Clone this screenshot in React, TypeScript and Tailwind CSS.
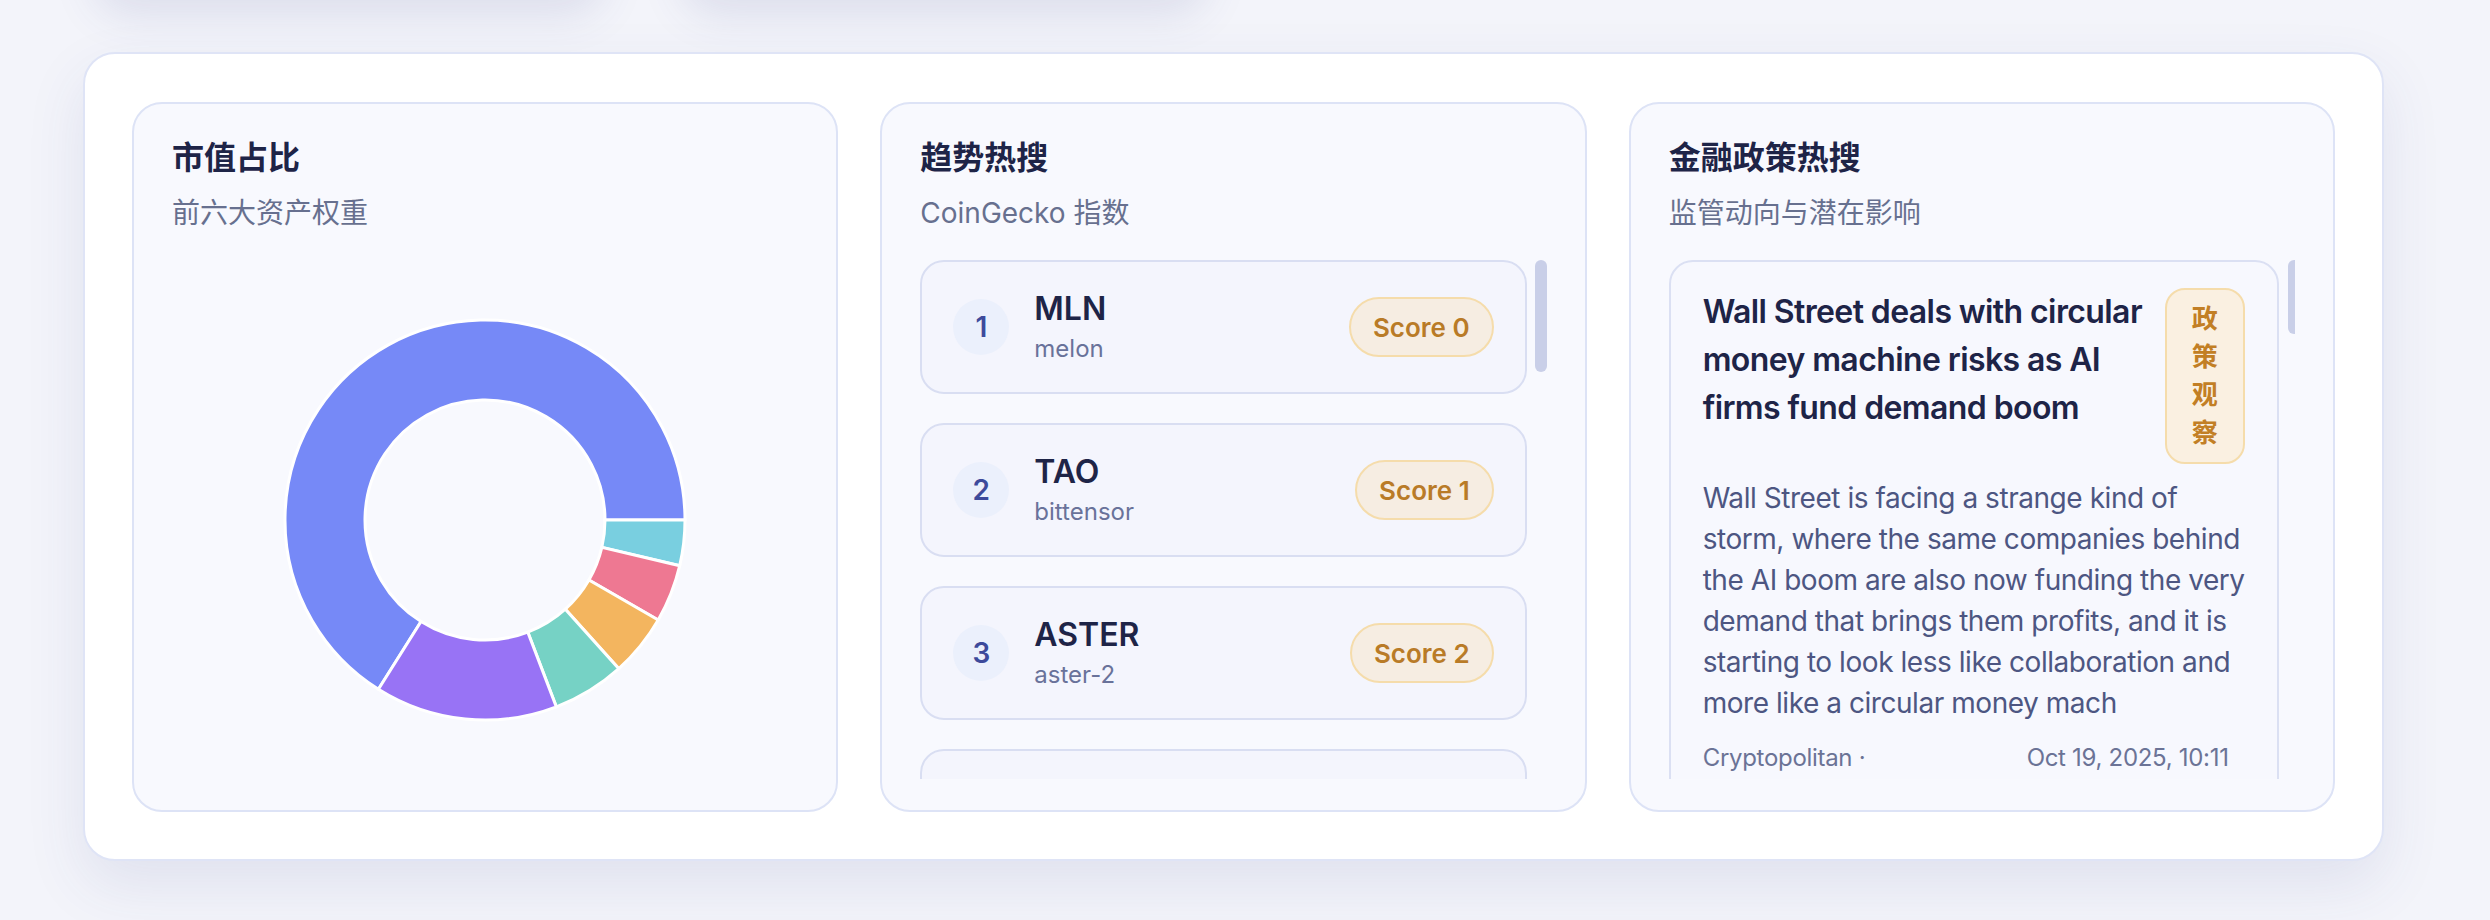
import React from "react";

const FONT = { fontFamily: "Inter, 'Noto Sans CJK SC', 'Noto Sans', sans-serif" };

type Seg = { a0: number; a1: number; color: string };

const segs: Seg[] = [
  { a0: 122.2, a1: 360, color: "#7689f7" },
  { a0: 0, a1: 13.2, color: "#79cfe0" },
  { a0: 13.2, a1: 30, color: "#ee7892" },
  { a0: 30, a1: 48, color: "#f3b55f" },
  { a0: 48, a1: 69.1, color: "#76d2c5" },
  { a0: 69.1, a1: 122.2, color: "#9873f5" },
];

function pt(cx: number, cy: number, r: number, deg: number) {
  const a = (deg * Math.PI) / 180;
  return [cx + r * Math.cos(a), cy + r * Math.sin(a)];
}

function arcPath(a0: number, a1: number, R: number, r: number) {
  const cx = 200;
  const cy = 200;
  const large = a1 - a0 > 180 ? 1 : 0;
  const [x0, y0] = pt(cx, cy, R, a0);
  const [x1, y1] = pt(cx, cy, R, a1);
  const [x2, y2] = pt(cx, cy, r, a1);
  const [x3, y3] = pt(cx, cy, r, a0);
  return `M ${x0} ${y0} A ${R} ${R} 0 ${large} 1 ${x1} ${y1} L ${x2} ${y2} A ${r} ${r} 0 ${large} 0 ${x3} ${y3} Z`;
}

function Donut() {
  return (
    <svg width="404" height="404" viewBox="-2 -2 404 404">
      {segs.map((s, i) => (
        <path
          key={i}
          d={arcPath(s.a0, s.a1, 200, 120)}
          fill={s.color}
          stroke="#ffffff"
          strokeWidth={3}
          strokeLinejoin="miter"
        />
      ))}
    </svg>
  );
}

function CardHeader({ title, sub }: { title: string; sub: string }) {
  return (
    <div className="flex flex-col">
      <div className="text-[32px] leading-[40px] font-bold text-[#1e2447]">{title}</div>
      <div className="mt-[14px] text-[28px] leading-[42px] text-[#67708f]">{sub}</div>
    </div>
  );
}

const trending = [
  { n: 1, sym: "MLN", id: "melon", score: 0 },
  { n: 2, sym: "TAO", id: "bittensor", score: 1 },
  { n: 3, sym: "ASTER", id: "aster-2", score: 2 },
];

function TrendItem({ n, sym, id, score }: { n: number; sym: string; id: string; score: number }) {
  return (
    <div className="h-[134px] shrink-0 rounded-[24px] border-2 border-[#d9def2] bg-[#f4f5fd] flex items-center pl-[31px] pr-[31px]">
      <div className="w-[56px] h-[56px] rounded-full bg-[#ebf0fc] flex items-center justify-center text-[28px] font-semibold text-[#3d4a9b]">
        {n}
      </div>
      <div className="ml-[25px] flex flex-col">
        <div className="text-[32px] leading-[38px] font-semibold text-[#1e2447]">{sym}</div>
        <div className="mt-[6px] text-[24px] leading-[30px] text-[#69729a]">{id}</div>
      </div>
      <div className="ml-auto h-[60px] px-[22px] rounded-full border-2 border-[#f5dcab] bg-[#f6ede2] flex items-center text-[26px] font-semibold text-[#b97b27]">
        Score {score}
      </div>
    </div>
  );
}

const headline = [
  "Wall Street deals with circular",
  "money machine risks as AI",
  "firms fund demand boom",
];

const body = [
  "Wall Street is facing a strange kind of",
  "storm, where the same companies behind",
  "the AI boom are also now funding the very",
  "demand that brings them profits, and it is",
  "starting to look less like collaboration and",
  "more like a circular money mach",
];

export default function App() {
  return (
    <div style={FONT} className="w-full h-[920px] overflow-hidden bg-[#f3f4fa] flex flex-col">
      <div className="-mt-[108px] h-[100px] flex gap-[80px] pl-[95px] shrink-0">
        <div className="w-[508px] h-full rounded-[32px] bg-[#f3f4fa] shadow-[0_22px_44px_rgba(60,70,140,0.13)]" />
        <div className="w-[523px] h-full rounded-[32px] bg-[#f3f4fa] shadow-[0_22px_44px_rgba(60,70,140,0.13)]" />
      </div>

      <div className="mt-[60px] ml-[83px] w-[2301px] h-[809px] shrink-0 rounded-[32px] border-2 border-[#dfe4f6] bg-white pt-[48px] px-[47px] pb-[47px] shadow-[0_24px_60px_rgba(60,70,140,0.10)]">
        <div className="grid grid-cols-3 gap-[42px] h-full">
          {/* Card 1 */}
          <div className="rounded-[30px] border-2 border-[#dde3f6] bg-[#f8f9fe] pt-[34px] px-[38px] pb-[31px] flex flex-col">
            <CardHeader title="市值占比" sub="前六大资产权重" />
            <div className="mt-[26px] flex-1 flex items-center justify-center">
              <Donut />
            </div>
          </div>

          {/* Card 2 */}
          <div className="rounded-[30px] border-2 border-[#dde3f6] bg-[#f8f9fe] pt-[34px] px-[38px] pb-[31px] flex flex-col min-h-0">
            <CardHeader title="趋势热搜" sub="CoinGecko 指数" />
            <div className="mt-[26px] flex-1 min-h-0 overflow-hidden flex">
              <div className="flex-1 flex flex-col gap-[29px]">
                {trending.map((t) => (
                  <TrendItem key={t.n} {...t} />
                ))}
                <div className="h-[134px] shrink-0 rounded-[24px] border-2 border-[#d9def2] bg-[#f4f5fd]" />
              </div>
              <div className="ml-[8px] w-[12px] shrink-0">
                <div className="h-[112px] w-full rounded-full bg-[#c9cfe8]" />
              </div>
            </div>
          </div>

          {/* Card 3 */}
          <div className="rounded-[30px] border-2 border-[#dde3f6] bg-[#f8f9fe] pt-[34px] px-[38px] pb-[31px] flex flex-col min-h-0">
            <CardHeader title="金融政策热搜" sub="监管动向与潜在影响" />
            <div className="mt-[26px] flex-1 min-h-0 overflow-hidden flex">
              <div className="flex-1 flex flex-col gap-[29px]">
                <div className="shrink-0 rounded-[24px] border-2 border-[#dbe0f3] bg-[#f7f8fe] pt-[26px] px-[32px] pb-[28px]">
                  <div className="flex items-start gap-[9px]">
                    <div className="flex-1 min-w-0 text-[32px] leading-[48px] font-semibold text-[#1e2447] tracking-[-0.6px]">
                      {headline.map((l, i) => (
                        <div key={i} className="whitespace-nowrap">{l}</div>
                      ))}
                    </div>
                    <div className="w-[80px] shrink-0 rounded-[20px] border-2 border-[#f5dcab] bg-[#faf0e1] py-[10px] flex flex-col items-center text-[26px] leading-[38px] font-semibold text-[#c27f25]">
                      <span>政</span>
                      <span>策</span>
                      <span>观</span>
                      <span>察</span>
                    </div>
                  </div>
                  <div className="mt-[14px] text-[28px] leading-[41px] text-[#4d5682] tracking-[-0.45px]">
                    {body.map((l, i) => (
                      <div key={i} className="whitespace-nowrap">{l}</div>
                    ))}
                  </div>
                  <div className="mt-[16px] flex justify-between pr-[16px] text-[24px] leading-[36px] text-[#6b7396] tracking-[-0.3px]">
                    <span>Cryptopolitan ·</span>
                    <span>Oct 19, 2025, 10:11</span>
                  </div>
                </div>
              </div>
              <div className="ml-[9px] w-[12px] shrink-0">
                <div className="h-[74px] w-full rounded-full bg-[#c9cfe8]" />
              </div>
            </div>
          </div>
        </div>
      </div>
    </div>
  );
}
